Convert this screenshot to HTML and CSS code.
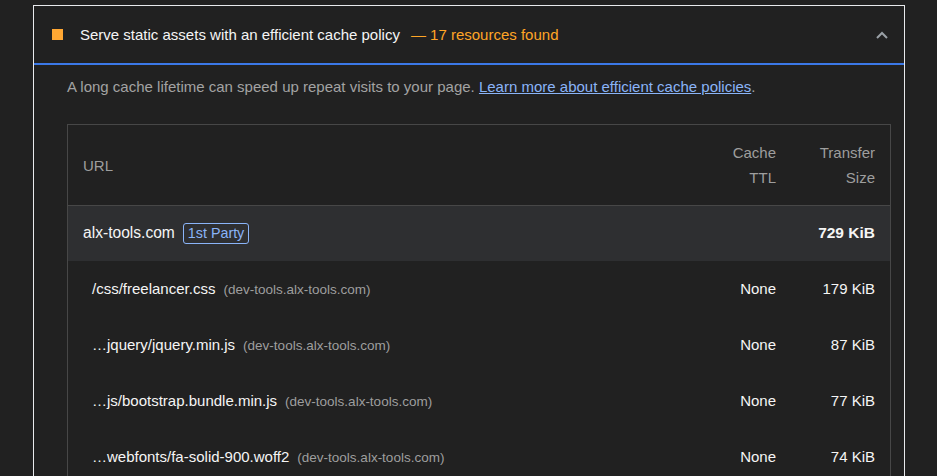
FILE: index.html
```html
<!DOCTYPE html>
<html>
<head>
<meta charset="utf-8">
<link rel="stylesheet" href="styles.css">
</head>
<body>
<div class="audit">
  <div class="audit-header">
    <span class="score-icon"></span>
    <span class="title">Serve static assets with an efficient cache policy</span>
    <span class="display-value">— 17 resources found</span>
    <svg class="chevron" width="12" height="8" viewBox="0 0 12 8"><path d="M1 7 L6 2 L11 7" fill="none" stroke="#9aa0a6" stroke-width="2"/></svg>
  </div>
  <div class="audit-body">
    <p class="description">A long cache lifetime can speed up repeat visits to your page. <a href="#" class="link">Learn more about efficient cache policies</a>.</p>
    <div class="table">
      <div class="row head">
        <div class="cell url">URL</div>
        <div class="cell num ttl">Cache<br>TTL</div>
        <div class="cell num size">Transfer<br>Size</div>
      </div>
      <div class="row group">
        <div class="cell url"><span class="entity">alx-tools.com</span><span class="badge">1st Party</span></div>
        <div class="cell num ttl"></div>
        <div class="cell num size bold">729 KiB</div>
      </div>
      <div class="row item">
        <div class="cell url sub"><span class="path">/css/freelancer.css</span><span class="host">(dev-tools.alx-tools.com)</span></div>
        <div class="cell num ttl">None</div>
        <div class="cell num size">179 KiB</div>
      </div>
      <div class="row item">
        <div class="cell url sub"><span class="path">…jquery/jquery.min.js</span><span class="host">(dev-tools.alx-tools.com)</span></div>
        <div class="cell num ttl">None</div>
        <div class="cell num size">87 KiB</div>
      </div>
      <div class="row item">
        <div class="cell url sub"><span class="path">…js/bootstrap.bundle.min.js</span><span class="host">(dev-tools.alx-tools.com)</span></div>
        <div class="cell num ttl">None</div>
        <div class="cell num size">77 KiB</div>
      </div>
      <div class="row item">
        <div class="cell url sub"><span class="path">…webfonts/fa-solid-900.woff2</span><span class="host">(dev-tools.alx-tools.com)</span></div>
        <div class="cell num ttl">None</div>
        <div class="cell num size">74 KiB</div>
      </div>
    </div>
  </div>
</div>
</body>
</html>
```
FILE: styles.css
```css
* { box-sizing: border-box; }
html, body {
  margin: 0;
  padding: 0;
  background: #212121;
  font-family: "Liberation Sans", Arial, sans-serif;
  font-size: 15px;
  color: #f5f5f5;
  overflow: hidden;
  height: 476px;
}
.audit {
  margin: 5px 0 0 33px;
  width: 872px;
  border: 1px solid #e8eaed;
  border-bottom: none;
  height: 600px;
}
.audit-header {
  display: flex;
  align-items: center;
  height: 59px;
  padding: 0 16px 0 18px;
  border-bottom: 2px solid #3b78e7;
}
.score-icon {
  width: 11px;
  height: 11px;
  background: #ffa733;
  flex: none;
  margin-right: 17px;
}
.title {
  color: #f5f5f5;
  line-height: 20px;
}
.display-value {
  color: #ffa526;
  margin-left: 11px;
  line-height: 20px;
}
.chevron {
  margin-left: auto;
}
.audit-body {
  padding: 12px 13px 0 33px;
}
.description {
  margin: 0;
  line-height: 20px;
  color: #a3a3a3;
}
.link {
  color: #8ab4f8;
  text-decoration: underline;
}
.table {
  margin-top: 27px;
  border: 1px solid #474747;
  border-bottom: none;
}
.row {
  display: grid;
  grid-template-columns: 1fr 100px 114px;
}
.cell {
  padding: 16px 15px;
  line-height: 24px;
}
.cell.num { text-align: right; }
.cell.ttl { padding-right: 0; }
.head {
  border-bottom: 1px solid #474747;
}
.head .cell {
  color: #9e9e9e;
  line-height: 25px;
  padding-top: 15px;
  padding-bottom: 15px;
}
.head .url {
  display: flex;
  align-items: center;
}
.group {
  background: #2e2f31;
}
.group .cell { padding-top: 15px; padding-bottom: 16px; }
.group .url {
  display: flex;
  align-items: center;
}
.entity {
  color: #f5f5f5;
  font-size: 15.6px;
}
.badge {
  display: inline-block;
  margin-left: 8px;
  border: 1px solid #8ab4f8;
  border-radius: 3px;
  color: #8ab4f8;
  padding: 0 4px;
  line-height: 19px;
  font-size: 14.3px;
}
.bold { font-weight: bold; font-size: 15.5px; }
.sub {
  padding-left: 24px;
  display: flex;
  align-items: baseline;
}
.host {
  color: #9e9e9e;
  font-size: 13.5px;
  line-height: 16px;
  margin-left: 8px;
}
```
